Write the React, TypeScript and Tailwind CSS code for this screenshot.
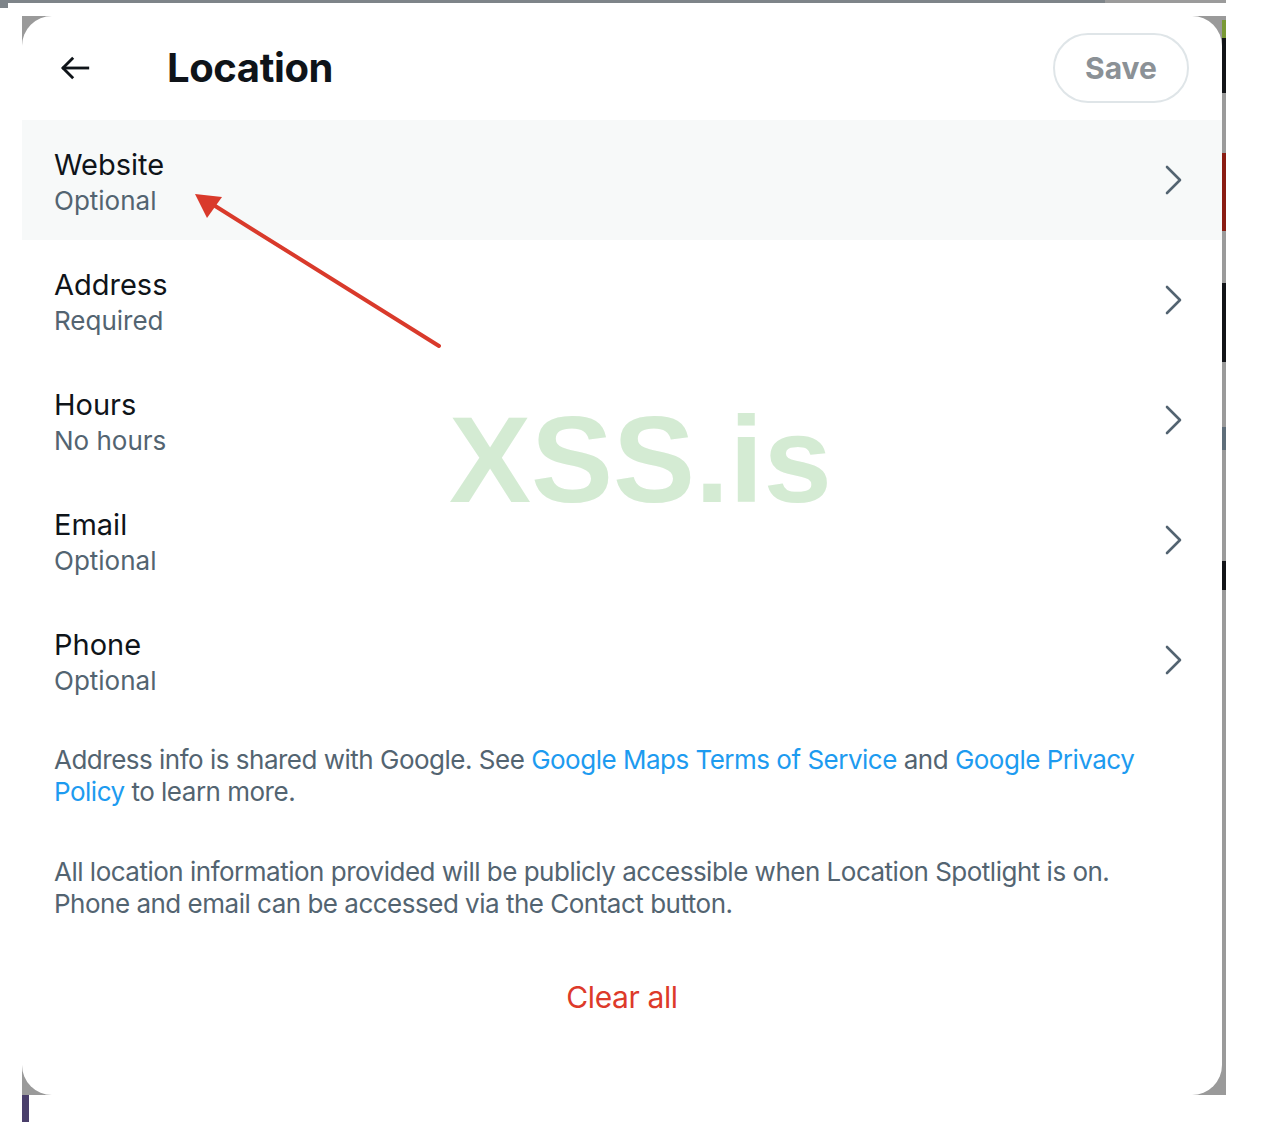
const rows = [
  { title: 'Website', sub: 'Optional', active: true },
  { title: 'Address', sub: 'Required' },
  { title: 'Hours', sub: 'No hours' },
  { title: 'Email', sub: 'Optional' },
  { title: 'Phone', sub: 'Optional' },
];

function BackArrow() {
  return (
    <svg width="34" height="34" viewBox="0 0 24 24" fill="none" stroke="#0f1419" strokeWidth="2" strokeLinecap="square">
      <path d="M21 12H4" />
      <path d="M10 5.5L3.5 12 10 18.5" />
    </svg>
  );
}

function Chevron() {
  return (
    <svg width="18" height="30" viewBox="0 0 18 30" fill="none" stroke="#536471" strokeWidth="2.6" strokeLinecap="round" strokeLinejoin="round">
      <path d="M3 2L16 15 3 28" />
    </svg>
  );
}

export default function App() {
  return (
    <div className="relative h-[1122px] w-[1280px] overflow-hidden bg-white font-['Inter','Noto_Sans',sans-serif]">
      {/* top edge of the page behind */}
      <div className="flex h-[3px] w-[1226px]">
        <div className="w-[1105px] bg-[#7e8489]" />
        <div className="flex-1 bg-[#9b9b9b]" />
      </div>
      <div className="h-[5px] w-[8px] bg-[#7e8489]" />

      {/* dimmed backdrop */}
      <div className="ml-[22px] mt-[8px] flex h-[1079px] w-[1204px] bg-[#9a9a9a]">
        <div className="relative flex h-full w-[1200px] flex-col rounded-[30px] bg-white">
          {/* header */}
          <div className="flex h-[104px] shrink-0 items-center pl-[36px] pr-[33px]">
            <BackArrow />
            <h1 className="ml-[75px] text-[40px] font-bold tracking-[-0.4px] text-[#0f1419]">Location</h1>
            <button className="ml-auto h-[70px] w-[136px] rounded-full border-2 border-[#dfe5e8] text-[30px] font-bold text-[#8b9196]">
              Save
            </button>
          </div>

          {/* rows */}
          {rows.map((r) => (
            <div
              key={r.title}
              className={`flex h-[120px] items-center justify-between pl-[32px] pr-[40px] ${r.active ? 'bg-[#f7f9f9]' : ''}`}
            >
              <div className="flex flex-col pt-[4px]">
                <span className="text-[29px] leading-[38px] text-[#0f1419]">{r.title}</span>
                <span className="text-[26px] leading-[34px] text-[#536471]">{r.sub}</span>
              </div>
              <Chevron />
            </div>
          ))}

          {/* footnotes */}
          <div className="flex flex-col gap-[48px] pl-[32px] pr-[24px] pt-[24px] text-[26px] leading-[32px] tracking-[-0.5px] text-[#536471]">
            <p>
              Address info is shared with Google. See{' '}
              <span className="text-[#1d9bf0]">Google Maps Terms of Service</span> and{' '}
              <span className="text-[#1d9bf0]">Google Privacy</span>
              <br />
              <span className="text-[#1d9bf0]">Policy</span> to learn more.
            </p>
            <p>
              All location information provided will be publicly accessible when Location Spotlight is on.
              <br />
              Phone and email can be accessed via the Contact button.
            </p>
          </div>

          <div className="flex justify-center pt-[57px]">
            <button className="text-[30px] leading-[40px] tracking-[-0.4px] text-[#dd3a2a]">Clear all</button>
          </div>
        </div>

        {/* strip of the background page */}
        <div className="flex w-[4px] flex-col">
          <div className="h-[4px] bg-[#9a9a9a]" />
          <div className="h-[18px] bg-[#7a9a35]" />
          <div className="h-[55px] bg-[#121418]" />
          <div className="h-[60px] bg-[#9a9a9a]" />
          <div className="h-[78px] bg-[#8a1c12]" />
          <div className="h-[52px] bg-[#9a9a9a]" />
          <div className="h-[79px] bg-[#121418]" />
          <div className="h-[65px] bg-[#9a9a9a]" />
          <div className="h-[23px] bg-[#5f6e7a]" />
          <div className="h-[111px] bg-[#9a9a9a]" />
          <div className="h-[29px] bg-[#121418]" />
          <div className="flex-1 bg-[#9a9a9a]" />
        </div>
      </div>
      <div className="ml-[22px] h-[40px] w-[7px] bg-[#4a3f6b]" />

      {/* watermark */}
      <div className="pointer-events-none absolute left-[449px] top-[398px] font-['Liberation_Sans',Arial,sans-serif] text-[123px] font-bold leading-none text-[#d4ebd3]">
        XSS.is
      </div>

      {/* annotation arrow */}
      <svg className="pointer-events-none absolute left-0 top-0" width="1280" height="1122" viewBox="0 0 1280 1122">
        <line x1="439" y1="346" x2="212" y2="204" stroke="#d93a2b" strokeWidth="4" strokeLinecap="round" />
        <polygon points="195,194 222,197 207,218" fill="#d93a2b" />
      </svg>
    </div>
  );
}
